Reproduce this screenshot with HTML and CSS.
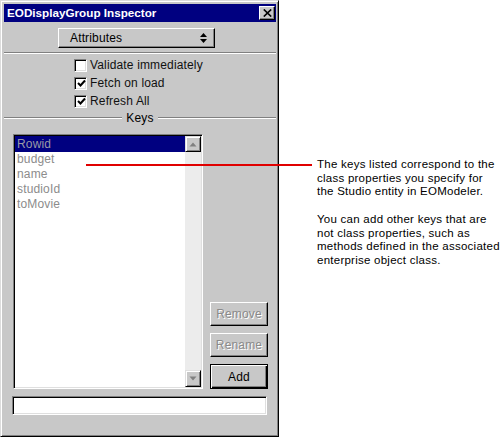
FILE: index.html
```html
<!DOCTYPE html>
<html>
<head>
<meta charset="utf-8">
<link rel="stylesheet" href="styles.css">
</head>
<body>
<div class="page">
  <div class="window">
    <div class="titlebar">
      <span class="title">EODisplayGroup Inspector</span>
      <span class="close"><svg width="9" height="8" viewBox="0 0 9 8"><path d="M0.8 0.5 L8.2 7.5 M8.2 0.5 L0.8 7.5" stroke="#000" stroke-width="1.7" fill="none"/></svg></span>
    </div>
    <div class="popup-row">
      <div class="popup">
        <span>Attributes</span>
        <svg class="updown" width="7" height="10" viewBox="0 0 7 10"><path d="M3.5 0 L7 4 L0 4 Z M0 6 L7 6 L3.5 10 Z" fill="#000"/></svg>
      </div>
    </div>
    <div class="sep"></div>
    <div class="checks">
      <div class="check"><span class="box"></span><span>Validate immediately</span></div>
      <div class="check"><span class="box"><svg width="9" height="9" viewBox="0 0 9 9"><path d="M1 4 L3.5 6.5 L8 1.5" stroke="#000" stroke-width="2" fill="none"/></svg></span><span>Fetch on load</span></div>
      <div class="check"><span class="box"><svg width="9" height="9" viewBox="0 0 9 9"><path d="M1 4 L3.5 6.5 L8 1.5" stroke="#000" stroke-width="2" fill="none"/></svg></span><span>Refresh All</span></div>
    </div>
    <div class="group-sep"><span class="gline"></span><span class="glabel">Keys</span><span class="gline"></span></div>
    <div class="keys">
      <div class="listbox">
        <div class="items">
          <div class="item selected">Rowid</div>
          <div class="item">budget</div>
          <div class="item">name</div>
          <div class="item">studioId</div>
          <div class="item">toMovie</div>
        </div>
        <div class="scrollbar">
          <div class="sbtn up"><svg width="8" height="5" viewBox="0 0 8 5"><path d="M4 0.5 L7.5 4.5 L0.5 4.5 Z" fill="#808080"/></svg></div>
          <div class="track"></div>
          <div class="sbtn down"><svg width="8" height="5" viewBox="0 0 8 5"><path d="M0.5 0.5 L7.5 0.5 L4 4.5 Z" fill="#808080"/></svg></div>
        </div>
      </div>
      <div class="buttons">
        <div class="btn disabled">Remove</div>
        <div class="btn disabled">Rename</div>
        <div class="btn default">Add</div>
      </div>
    </div>
    <div class="field"></div>
  </div>
  <div class="callout">
    <p>The keys listed correspond to the<br>class properties you specify for<br>the Studio entity in EOModeler.</p>
    <p>You can add other keys that are<br>not class properties, such as<br>methods defined in the associated<br>enterprise object class.</p>
  </div>
  <div class="pointer"></div>
</div>
</body>
</html>
```
FILE: styles.css
```css
html, body {
  margin: 0;
  padding: 0;
  background: #fff;
}
body {
  font-family: "Liberation Sans", Arial, sans-serif;
  font-size: 12px;
  color: #000;
}
.page {
  position: relative;
  display: flex;
  align-items: flex-start;
  width: 503px;
  height: 437px;
}
.window {
  width: 279px;
  height: 437px;
  box-sizing: border-box;
  flex: none;
  background: #c8c8c8;
  border: 1px solid;
  border-color: #dcdcdc #000 #000 #dcdcdc;
  box-shadow: inset 1px 1px #fff, inset -1px -1px #808080;
  padding: 3px 2px 2px 3px;
  display: flex;
  flex-direction: column;
  letter-spacing: 0.15px;
}
.titlebar {
  height: 18px;
  background: #000080;
  display: flex;
  align-items: center;
  justify-content: space-between;
  padding-left: 3px;
}
.title {
  color: #fff;
  font-weight: bold;
  font-size: 11.7px;
  line-height: 18px;
  letter-spacing: 0;
}
.close {
  width: 16px;
  height: 14px;
  box-sizing: border-box;
  margin-right: 1px;
  background: #c8c8c8;
  border: 1px solid;
  border-color: #fff #000 #000 #fff;
  box-shadow: inset -1px -1px #808080;
  display: flex;
  align-items: center;
  justify-content: center;
}
.popup-row {
  margin-top: 6px;
  padding-left: 54px;
}
.popup {
  width: 157px;
  height: 20px;
  box-sizing: border-box;
  border: 1px solid;
  border-color: #fff #000 #000 #fff;
  box-shadow: inset -1px -1px #808080;
  display: flex;
  align-items: center;
  justify-content: space-between;
  padding: 0 7px 0 11px;
  line-height: 18px;
}
.sep {
  margin-top: 4px;
  height: 0;
  border-top: 1px solid #808080;
  border-bottom: 1px solid #fff;
}
.checks {
  margin-top: 2px;
  padding-left: 70px;
}
.check {
  height: 18px;
  display: flex;
  align-items: center;
  color: #111;
}
.box {
  width: 13px;
  height: 13px;
  box-sizing: border-box;
  background: #fff;
  border: 1px solid;
  border-color: #808080 #fff #fff #808080;
  box-shadow: inset 1px 1px #000, inset -1px -1px #dfdfdf;
  margin-right: 3px;
  display: flex;
  align-items: center;
  justify-content: center;
}
.box svg {
  margin: 1px 0 0 1px;
}
.group-sep {
  margin-top: 1px;
  height: 14px;
  display: flex;
  align-items: center;
}
.gline {
  flex: 1;
  height: 0;
  border-top: 1px solid #808080;
  border-bottom: 1px solid #fff;
}
.glabel {
  padding: 0 4px;
  line-height: 14px;
}
.keys {
  margin-top: 9px;
  padding-left: 9px;
  display: flex;
  align-items: flex-end;
  gap: 7px;
}
.listbox {
  width: 190px;
  height: 255px;
  box-sizing: border-box;
  background: #fff;
  border: 1px solid;
  border-color: #808080 #fff #fff #808080;
  box-shadow: inset 1px 1px #000, inset -1px -1px #dfdfdf;
  padding: 1px;
  display: flex;
}
.items {
  width: 170px;
}
.item {
  height: 15px;
  line-height: 15px;
  padding-left: 2px;
  color: #8c8c8c;
}
.item.selected {
  height: 16px;
  line-height: 16px;
  background: #000080;
  color: #9a9aa6;
}
.scrollbar {
  width: 16px;
  display: flex;
  flex-direction: column;
}
.sbtn {
  height: 16px;
  box-sizing: border-box;
  background: #c8c8c8;
  border: 1px solid;
  border-color: #dfdfdf #000 #000 #dfdfdf;
  box-shadow: inset 1px 1px #fff, inset -1px -1px #808080;
  display: flex;
  align-items: center;
  justify-content: center;
}
.sbtn.down {
  height: 17px;
}
.track {
  flex: 1;
  background: #ececec;
}
.buttons {
  display: flex;
  flex-direction: column;
  gap: 7px;
}
.btn {
  width: 58px;
  height: 24px;
  box-sizing: border-box;
  border: 1px solid;
  border-color: #fff #000 #000 #fff;
  box-shadow: inset -1px -1px #808080;
  display: flex;
  align-items: center;
  justify-content: center;
}
.btn.disabled {
  color: #8a8a8a;
  text-shadow: 1px 1px #fff;
}
.btn.default {
  height: 25px;
  border-color: #000;
  box-shadow: inset 1px 1px #fff, inset -1px -1px #000, inset -2px -2px #808080;
}
.field {
  margin-top: 7px;
  margin-left: 8px;
  width: 255px;
  height: 19px;
  box-sizing: border-box;
  background: #fff;
  border: 1px solid;
  border-color: #808080 #fff #fff #808080;
  box-shadow: inset 1px 1px #000, inset -1px -1px #dfdfdf;
}
.callout {
  margin-left: 38px;
  margin-top: 158px;
  font-size: 11.5px;
  letter-spacing: 0.25px;
  line-height: 13.7px;
  color: #000;
}
.callout p {
  margin: 0 0 13.7px 0;
  white-space: nowrap;
}
.pointer {
  position: absolute;
  left: 86px;
  top: 164px;
  width: 226px;
  height: 2px;
  background: #e00000;
}
```
